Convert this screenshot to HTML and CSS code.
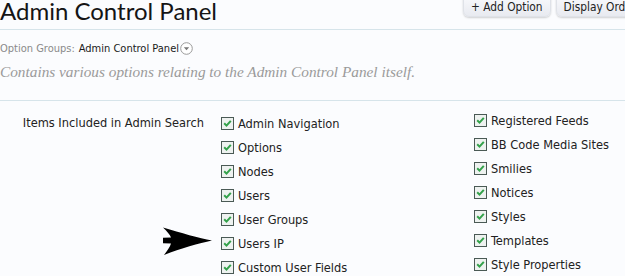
FILE: index.html
```html
<!DOCTYPE html>
<html>
<head>
<meta charset="utf-8">
<link rel="stylesheet" href="styles.css">
</head>
<body>
<div class="page">
  <header class="header">
    <h1 class="title">Admin Control Panel</h1>
    <div class="buttons">
      <span class="btn">+ Add Option</span>
      <span class="btn">Display Order</span>
    </div>
  </header>
  <div class="crumb">
    <span class="crumb-label">Option Groups:</span>
    <span class="crumb-value">Admin Control Panel</span>
    <svg class="crumb-icon" width="13" height="13" viewBox="0 0 13 13"><circle cx="6.5" cy="6.5" r="5.8" fill="#fff" stroke="#9a9a9a" stroke-width="1"/><path d="M3.8 5.2h5.4L6.5 8.2z" fill="#777"/></svg>
  </div>
  <p class="desc">Contains various options relating to the Admin Control Panel itself.</p>
  <div class="form-row">
    <div class="label">Items Included in Admin Search</div>
    <ul class="col col-a">
      <li><i class="cb"></i>Admin Navigation</li>
      <li><i class="cb"></i>Options</li>
      <li><i class="cb"></i>Nodes</li>
      <li><i class="cb"></i>Users</li>
      <li><i class="cb"></i>User Groups</li>
      <li><i class="cb"></i>Users IP</li>
      <li><i class="cb"></i>Custom User Fields</li>
    </ul>
    <ul class="col col-b">
      <li><i class="cb"></i>Registered Feeds</li>
      <li><i class="cb"></i>BB Code Media Sites</li>
      <li><i class="cb"></i>Smilies</li>
      <li><i class="cb"></i>Notices</li>
      <li><i class="cb"></i>Styles</li>
      <li><i class="cb"></i>Templates</li>
      <li><i class="cb"></i>Style Properties</li>
    </ul>
    <svg class="arrow" width="54" height="30" viewBox="0 0 54 30"><path d="M51 14.5 C38 12, 20 7, 2 1.5 C6 5.5, 9 8.5, 10 11.5 L2 11.8 L2 17.2 L10 17.5 C9 21, 6 25, 3 29 C20 22, 38 17.5, 51 14.5 Z" fill="#000"/></svg>
  </div>
</div>
</body>
</html>
```
FILE: styles.css
```css
html, body {
  margin: 0;
  padding: 0;
  background: #fbfcfe;
  overflow: hidden;
}
.page {
  width: 700px;
  font-family: "DejaVu Sans Condensed", "DejaVu Sans", sans-serif;
  font-stretch: condensed;
  color: #222;
}
.header {
  display: flex;
  height: 29px;
  border-bottom: 1px solid #d6e4ea;
}
.title {
  flex: 0 0 463px;
  margin: -2px 0 0;
  font-family: "Lato", sans-serif;
  font-stretch: normal;
  font-weight: 400;
  font-size: 24px;
  line-height: 26px;
  color: #151515;
}
.buttons {
  display: flex;
  gap: 5px;
  margin-top: -3px;
}
.btn {
  display: inline-block;
  font-size: 11.8px;
  line-height: 18px;
  height: 18px;
  padding: 0 7px;
  border-radius: 0 0 6px 6px;
  background: linear-gradient(#f7f8fb, #e8eaf0);
  border: 1px solid #dfe2e8;
  box-shadow: 0 1px 2px rgba(0,0,0,0.18);
  color: #222;
  white-space: nowrap;
}
.crumb {
  display: flex;
  align-items: center;
  margin-top: 11px;
  font-size: 11px;
  height: 14px;
}
.crumb-label {
  color: #8a8a8a;
  margin-right: 4px;
}
.crumb-value {
  color: #1a1a1a;
}
.crumb-icon {
  margin-left: 1px;
}
.desc {
  margin: 8px 0 0;
  font-family: "Liberation Serif", serif;
  font-stretch: normal;
  font-style: italic;
  font-size: 15.3px;
  line-height: 18px;
  color: #9a9a9a;
  height: 37px;
  border-bottom: 1px solid #d6e4ea;
}
.form-row {
  position: relative;
  display: flex;
  padding-top: 10px;
  font-size: 12.7px;
}
.label {
  width: 204px;
  text-align: right;
  line-height: 24px;
  color: #222;
}
.col {
  list-style: none;
  margin: 0;
  padding: 0;
}
.col li {
  display: flex;
  align-items: center;
  height: 24px;
  white-space: nowrap;
}
.col-a {
  margin-left: 17px;
  width: 253px;
}
.col-b {
  margin-top: -3px;
}
.cb {
  display: inline-block;
  width: 11px;
  height: 11px;
  border: 1px solid #4a5a55;
  background: #eef2f0 url("data:image/svg+xml;utf8,<svg xmlns='http://www.w3.org/2000/svg' width='11' height='11'><path d='M2.2 5.3 L4.5 7.6 L8.8 2.8' fill='none' stroke='%2333a14a' stroke-width='2'/></svg>") no-repeat center;
  margin-right: 4px;
  flex: none;
}
.arrow {
  position: absolute;
  left: 161px;
  top: 125px;
}
```
